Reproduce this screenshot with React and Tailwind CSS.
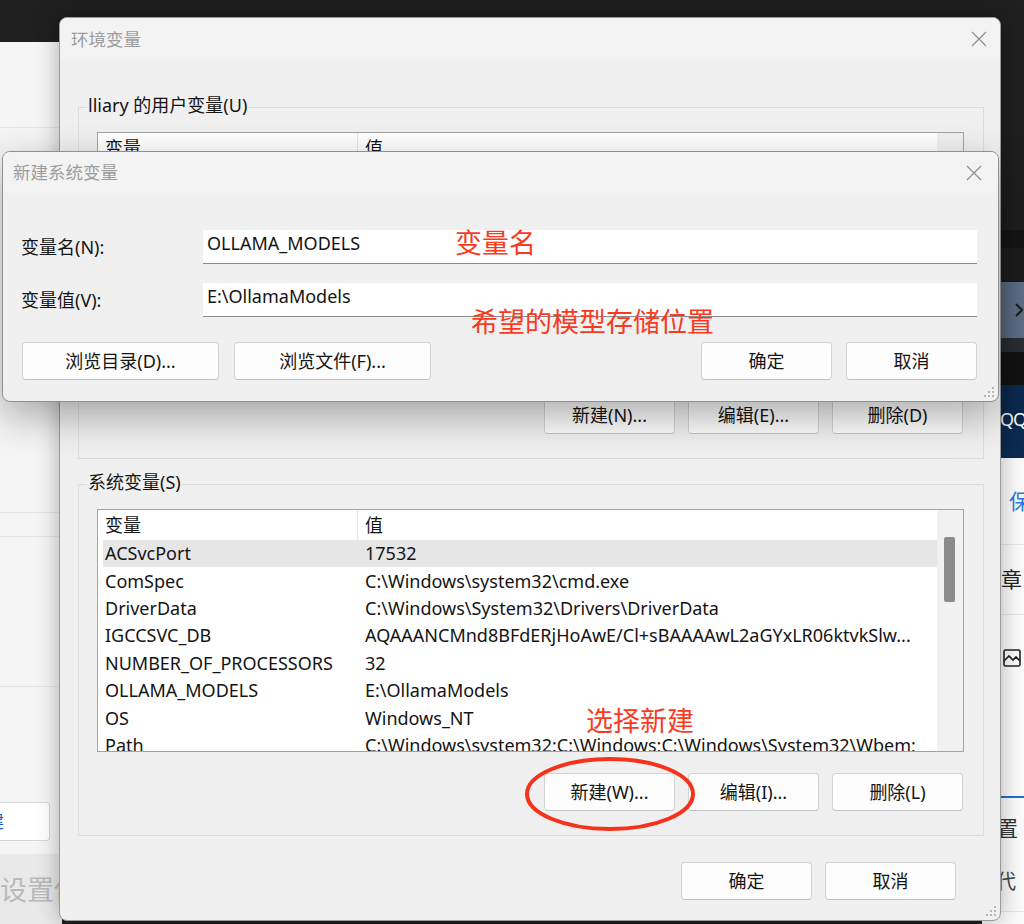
import React from "react";

const userVars = [
  ["OneDrive", "C:\\Users\\lliary\\OneDrive"],
  ["Path", "C:\\Users\\lliary\\AppData\\Local\\Microsoft\\WindowsApps;"],
  ["TEMP", "C:\\Users\\lliary\\AppData\\Local\\Temp"],
  ["TMP", "C:\\Users\\lliary\\AppData\\Local\\Temp"],
];

const sysVars = [
  ["ACSvcPort", "17532"],
  ["ComSpec", "C:\\Windows\\system32\\cmd.exe"],
  ["DriverData", "C:\\Windows\\System32\\Drivers\\DriverData"],
  ["IGCCSVC_DB", "AQAAANCMnd8BFdERjHoAwE/Cl+sBAAAAwL2aGYxLR06ktvkSlw..."],
  ["NUMBER_OF_PROCESSORS", "32"],
  ["OLLAMA_MODELS", "E:\\OllamaModels"],
  ["OS", "Windows_NT"],
  ["Path", "C:\\Windows\\system32;C:\\Windows;C:\\Windows\\System32\\Wbem;"],
];

const CloseX = () => (
  <svg width="16" height="16" viewBox="0 0 16 16" fill="none" stroke="#8c8c8c" strokeWidth="1.1">
    <path d="M1 1L15 15M15 1L1 15" />
  </svg>
);

const Grip = () => (
  <svg width="12" height="12" viewBox="0 0 12 12" fill="#b8b8b8">
    <rect x="9" y="1" width="2" height="2" />
    <rect x="9" y="5" width="2" height="2" />
    <rect x="5" y="5" width="2" height="2" />
    <rect x="9" y="9" width="2" height="2" />
    <rect x="5" y="9" width="2" height="2" />
    <rect x="1" y="9" width="2" height="2" />
  </svg>
);

const Btn = ({ className = "", children }) => (
  <div
    className={
      "flex h-[38px] shrink-0 items-center justify-center rounded-[4px] border border-[#d3d3d3] border-b-[#c2c2c2] bg-[#fdfdfd] text-[18px] text-[#141414] " +
      className
    }
  >
    {children}
  </div>
);

const ListBox = ({ rows, highlight }) => (
  <div className="ml-[18px] flex h-[243px] w-[867px] overflow-hidden border border-[#a3a3a3] bg-white text-[18px] text-[#141414]">
    <div className="flex-1 overflow-hidden pl-[5px]">
      <div className="flex h-[30px] items-center">
        <div className="flex h-full w-[254px] shrink-0 items-center pl-[2px]">变量</div>
        <div className="h-full w-px bg-[#e6e6e6]" />
        <div className="pl-[7px]">值</div>
      </div>
      {rows.map(([k, v], i) => (
        <div
          key={k}
          className={"flex h-[27.4px] items-center whitespace-nowrap " + (i === highlight ? "bg-[#e6e6e6]" : "")}
        >
          <div className="w-[255px] shrink-0 pl-[2px]">{k}</div>
          <div className="pl-[7px]">{v}</div>
        </div>
      ))}
    </div>
    <div className="w-[26px] shrink-0 bg-[#f1f1f1] pl-[7px] pt-[27px]">
      <div className="h-[65px] w-[11px] rounded-[2px] bg-[#8a8a8a]" />
    </div>
  </div>
);

const GroupBox = ({ label, rows, highlight, buttons }) => (
  <div className="ml-[18px] h-[352px] w-[906px] shrink-0 border border-[#dcdcdc]">
    <div className="-mt-[15px] ml-[8px] w-fit bg-[#f0f0f0] px-[1px] text-[18px] leading-[24px] text-[#141414]">
      {label}
    </div>
    <div className="mt-[15px]">
      <ListBox rows={rows} highlight={highlight} />
    </div>
    <div className="mt-[21px] flex justify-end gap-[13px] pr-[20px]">
      {buttons.map((b) => (
        <Btn key={b} className="w-[131px]">
          {b}
        </Btn>
      ))}
    </div>
  </div>
);

const Red = ({ className = "", children }) => (
  <div className={"absolute whitespace-nowrap text-[27px] leading-[27px] text-[#f93a1f] " + className}>{children}</div>
);

export default function App() {
  return (
    <div className="relative h-[924px] w-[1024px] overflow-hidden bg-[#1f1f1f] font-['Noto_Sans','Noto_Sans_CJK_SC',sans-serif]">
      {/* background window on the left */}
      <div className="absolute left-0 top-[42px] flex h-[882px] w-[62px] flex-col bg-[#f5f5f5]">
        <div className="h-[86px] shrink-0 border-b border-[#e8e8e8]" />
        <div className="h-[385px] shrink-0 border-b border-[#e4e4e4]" />
        <div className="h-[24px] shrink-0 border-b border-[#e4e4e4]" />
        <div className="h-[150px] shrink-0 border-b border-[#e4e4e4]" />
        <div className="h-[115px] shrink-0" />
        <div className="flex h-[39px] w-[50px] shrink-0 items-center overflow-hidden rounded-r-[4px] border border-l-0 border-[#d6d6d6] bg-white">
          <span className="-ml-[14px] text-[18px] text-[#1f5fbf]">建</span>
        </div>
        <div className="h-[13px] shrink-0" />
        <div className="flex-1 bg-[#e9e9e9] pt-[22px]">
          <div className="whitespace-nowrap text-[27px] leading-[27px] text-[#b9b9b9]">设置使</div>
        </div>
      </div>

      {/* background window on the right */}
      <div className="absolute left-[982px] top-0 flex h-[924px] w-[42px] flex-col">
        <div className="h-[230px] shrink-0 bg-[#1f1f1f]" />
        <div className="h-[18px] shrink-0 bg-[#161616]" />
        <div className="h-[34px] shrink-0 bg-[#1d1d1d]" />
        <div className="flex h-[56px] shrink-0 items-center justify-end bg-[#5f7188] pr-[1px]">
          <svg width="8" height="14" viewBox="0 0 8 14" fill="none" stroke="#1e1e1e" strokeWidth="2">
            <path d="M1 1L7 7L1 13" />
          </svg>
        </div>
        <div className="h-[14px] shrink-0 bg-[#2b2e34]" />
        <div className="h-[33px] shrink-0 bg-[#131313]" />
        <div className="flex h-[73px] shrink-0 items-start bg-[#0c2a52] pl-[18px] pt-[24px]">
          <span className="text-[18px] leading-[20px] tracking-[-1px] text-white">QQ</span>
        </div>
        <div className="flex flex-1 flex-col bg-[#fafafa]">
          <div className="h-[87px] shrink-0 border-b border-[#e6e6e6] pl-[27px] pt-[31px]">
            <span className="text-[21px] leading-[24px] text-[#2b7bd8]">保</span>
          </div>
          <div className="h-[70px] shrink-0 border-b border-[#e6e6e6] pt-[22px]">
            <span className="-ml-[2px] whitespace-nowrap text-[21px] leading-[24px] text-[#222]">文章</span>
          </div>
          <div className="h-[181px] shrink-0 pl-[21px] pt-[34px]">
            <svg width="18" height="18" viewBox="0 0 18 18" fill="none" stroke="#222" strokeWidth="1.6">
              <rect x="1" y="1" width="16" height="16" rx="1.5" />
              <path d="M1 12L6 7L10 11L13 8L17 12" />
            </svg>
          </div>
          <div className="h-[2px] shrink-0 bg-[#1f6fd0]" />
          <div className="h-[56px] shrink-0 pt-[18px]">
            <span className="-ml-[6px] whitespace-nowrap text-[21px] leading-[24px] text-[#333]">设置</span>
          </div>
          <div className="h-[58px] shrink-0 border-b border-[#e6e6e6] pt-[17px]">
            <span className="-ml-[6px] whitespace-nowrap text-[20px] leading-[22px] text-[#444]">替代</span>
          </div>
        </div>
      </div>

      {/* 环境变量 */}
      <div className="absolute left-[59px] top-[17px] flex h-[904px] w-[942px] flex-col overflow-hidden rounded-[8px] border border-[#9b9b9b] bg-[#f0f0f0] shadow-[0_0_22px_rgba(0,0,0,0.3)]">
        <div className="flex h-[42px] shrink-0 items-center justify-between bg-[#f3f3f3] pl-[11px] pr-[13px]">
          <span className="text-[17.5px] text-[#9d9d9d]">环境变量</span>
          <CloseX />
        </div>
        <div className="flex flex-1 flex-col pt-[47px]">
          <GroupBox
            label="lliary 的用户变量(U)"
            rows={userVars}
            highlight={-1}
            buttons={["新建(N)...", "编辑(E)...", "删除(D)"]}
          />
          <div className="mt-[25px]">
            <GroupBox
              label="系统变量(S)"
              rows={sysVars}
              highlight={0}
              buttons={["新建(W)...", "编辑(I)...", "删除(L)"]}
            />
          </div>
          <div className="mt-[26px] flex justify-end gap-[13px] pr-[44px]">
            <Btn className="w-[131px]">确定</Btn>
            <Btn className="w-[131px]">取消</Btn>
          </div>
        </div>
        <div className="absolute bottom-[3px] right-[3px]">
          <Grip />
        </div>
      </div>

      {/* 新建系统变量 */}
      <div className="absolute left-[2px] top-[151px] flex h-[251px] w-[997px] flex-col overflow-hidden rounded-[8px] border border-[#8f8f8f] bg-[#f0f0f0] shadow-[0_14px_40px_rgba(0,0,0,0.32)]">
        <div className="flex h-[41px] shrink-0 items-center justify-between bg-[#f3f3f3] pl-[10px] pr-[16px]">
          <span className="text-[17.5px] text-[#9d9d9d]">新建系统变量</span>
          <CloseX />
        </div>
        <div className="flex flex-col pl-[18px] pr-[21px] pt-[37px] text-[18px] text-[#141414]">
          <div className="flex h-[34px] items-center">
            <div className="w-[182px] shrink-0">变量名(N):</div>
            <div className="h-full flex-1 border-b border-[#8a8a8a] bg-white pl-[4px] pt-[1px] leading-[24px]">OLLAMA_MODELS</div>
          </div>
          <div className="mt-[19px] flex h-[34px] items-center">
            <div className="w-[182px] shrink-0">变量值(V):</div>
            <div className="h-full flex-1 border-b border-[#8a8a8a] bg-white pl-[4px] pt-[1px] leading-[24px]">E:\OllamaModels</div>
          </div>
          <div className="mt-[25px] flex items-center">
            <Btn className="ml-[1px] w-[197px]">浏览目录(D)...</Btn>
            <Btn className="ml-[15px] w-[197px]">浏览文件(F)...</Btn>
            <div className="flex-1" />
            <Btn className="w-[131px]">确定</Btn>
            <Btn className="ml-[14px] w-[131px]">取消</Btn>
          </div>
        </div>
        <div className="absolute bottom-[3px] right-[3px]">
          <Grip />
        </div>
      </div>

      {/* annotations */}
      <Red className="left-[455px] top-[229px]">变量名</Red>
      <Red className="left-[471px] top-[308px]">希望的模型存储位置</Red>
      <Red className="left-[586px] top-[707px]">选择新建</Red>
      <svg className="absolute left-[524px] top-[756px]" width="172" height="76" viewBox="0 0 172 76" fill="none">
        <ellipse cx="86" cy="38" rx="83" ry="35" stroke="#f7321a" strokeWidth="4" />
      </svg>
    </div>
  );
}
